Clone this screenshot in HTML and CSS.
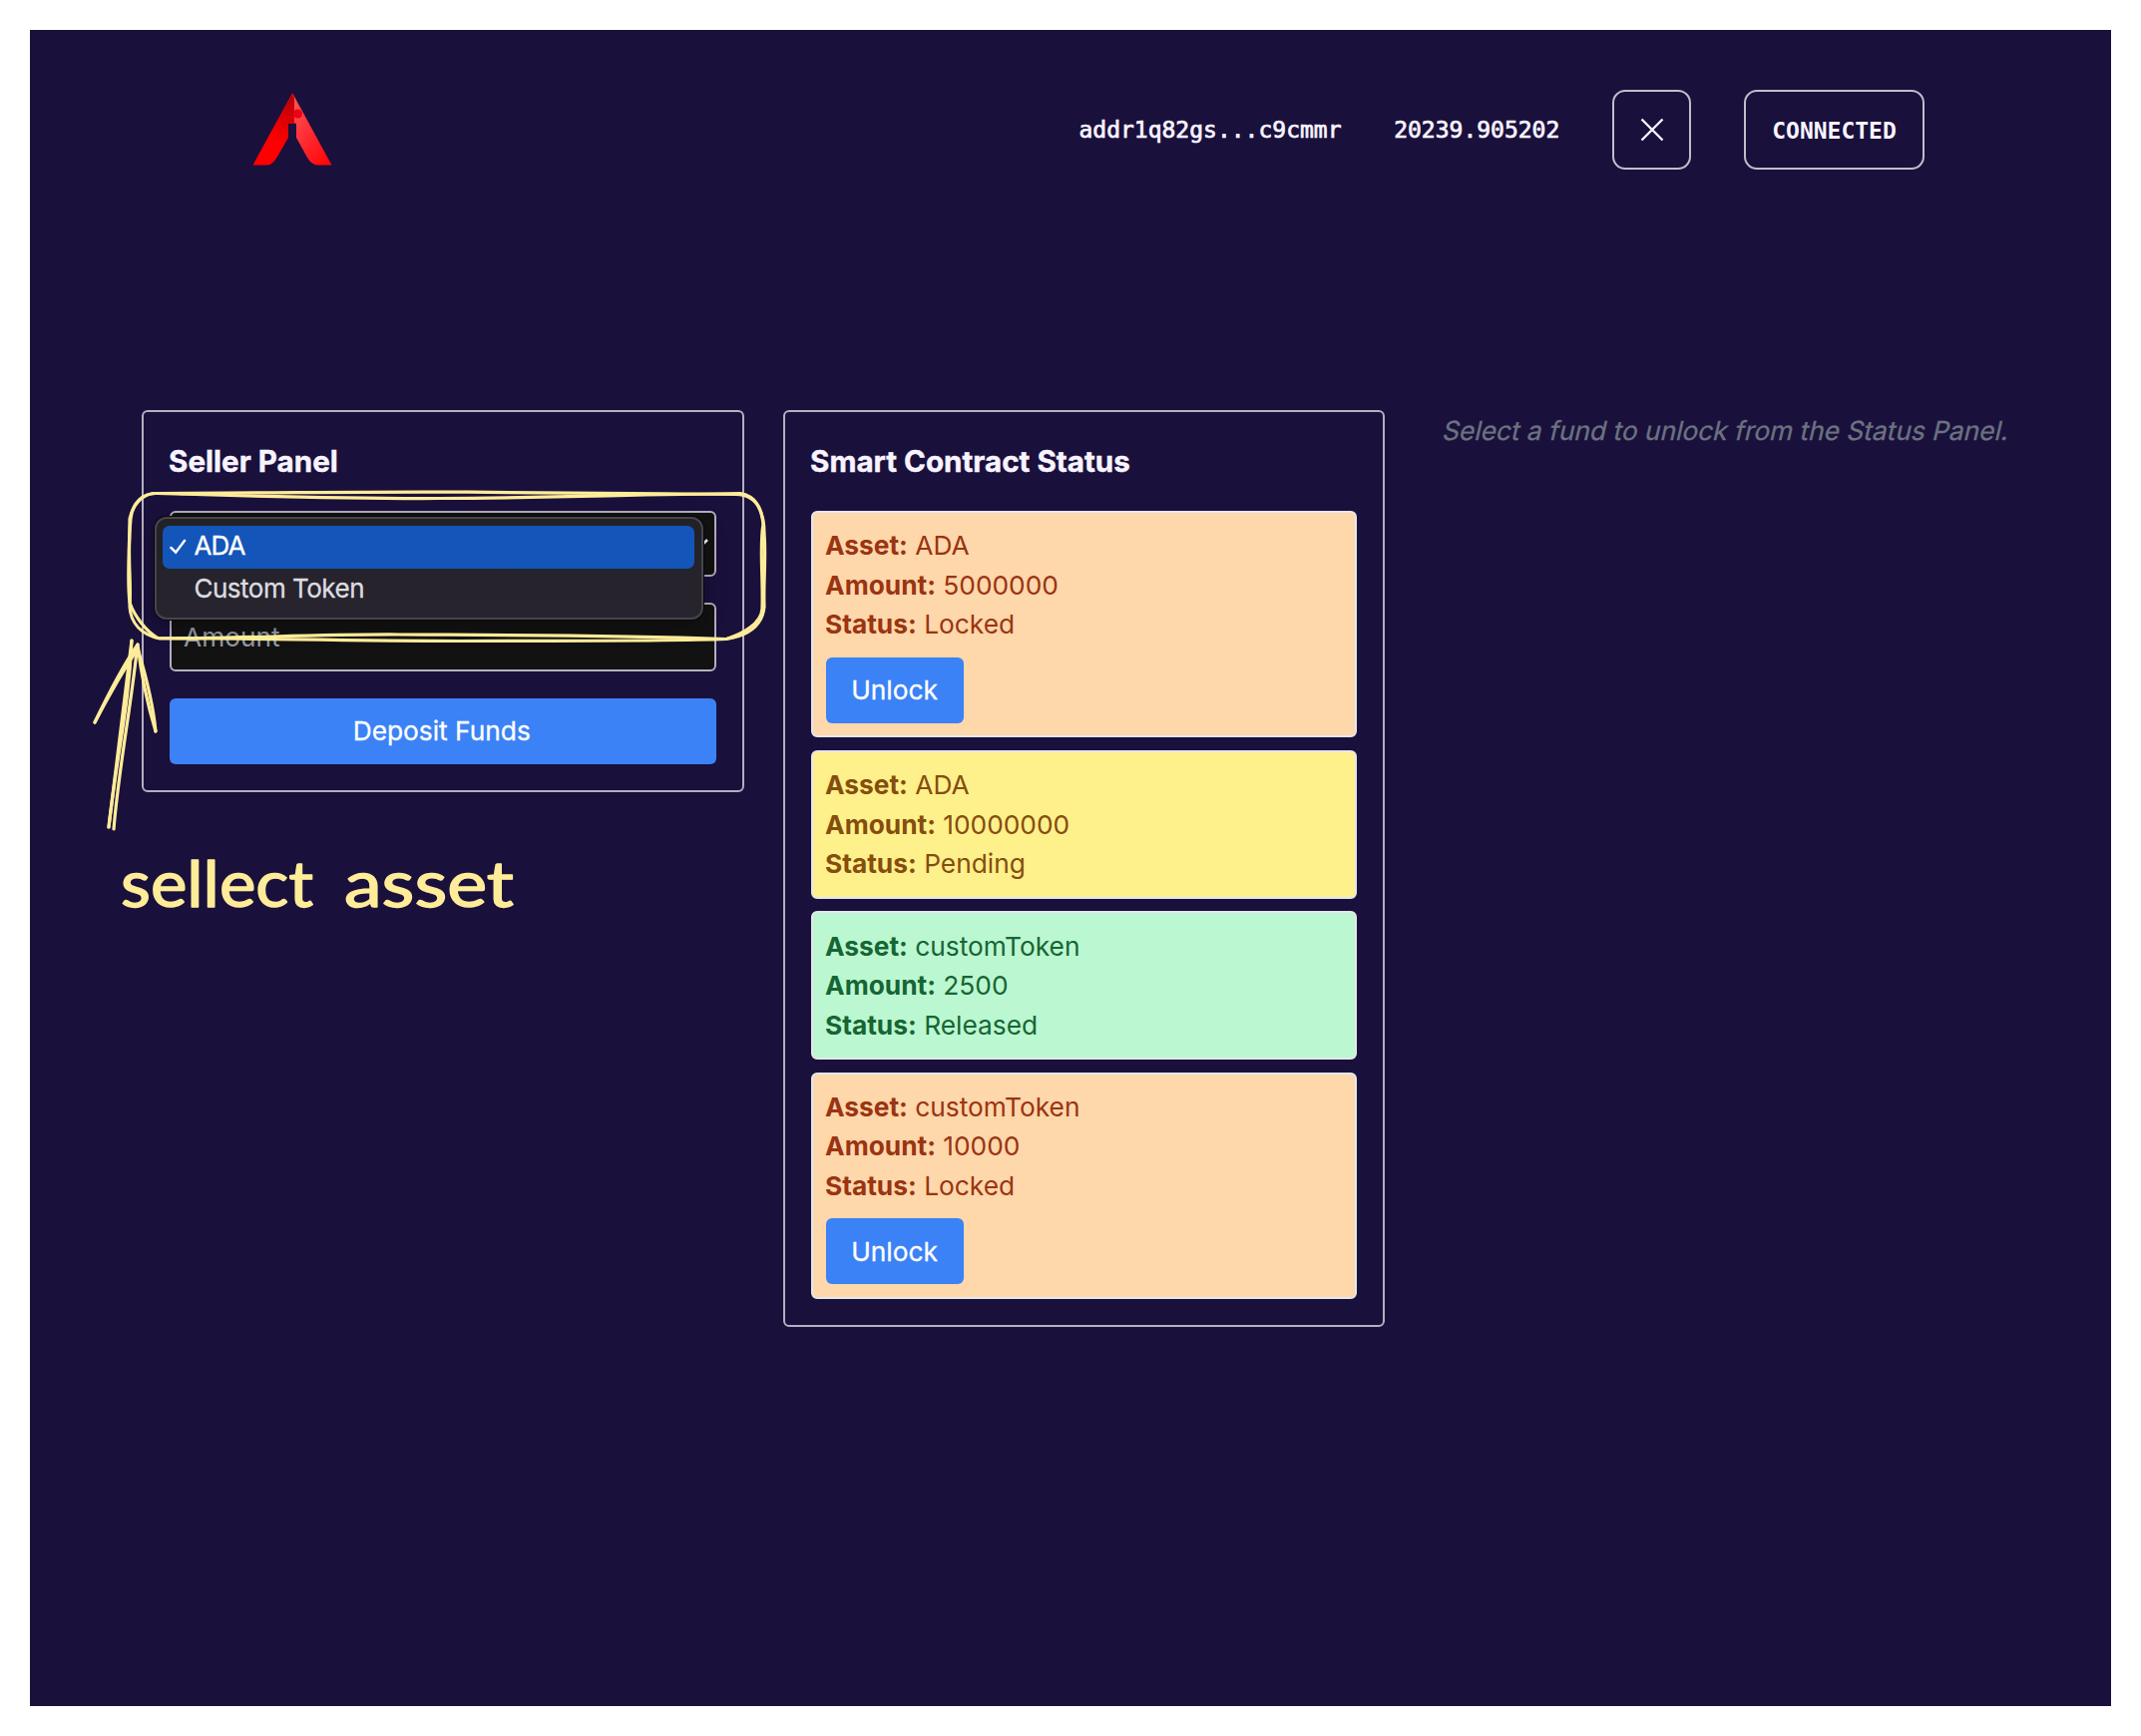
FILE: index.html
```html
<!DOCTYPE html>
<html lang="en">
<head>
<meta charset="utf-8">
<title>Escrow</title>
<link rel="stylesheet" href="styles.css">
</head>
<body>
<div class="app">
  <header class="topbar">
    <svg class="logo" viewBox="0 0 80 73">
      <defs>
        <linearGradient id="lg" x1="0.6" y1="0" x2="0.2" y2="1"><stop offset="0" stop-color="#c00008"/><stop offset="0.6" stop-color="#ff0000"/></linearGradient>
        <linearGradient id="rg" x1="0" y1="0" x2="0.8" y2="1"><stop offset="0" stop-color="#ff5a50"/><stop offset="0.5" stop-color="#ff3038"/><stop offset="1" stop-color="#ff0808"/></linearGradient>
      </defs>
      <path fill="url(#lg)" d="M40 0L43 6V31H36V45L25 64Q20 72.500 15 72.500H0.500Z"/>
      <path fill="url(#rg)" d="M40 0L79.500 72.500H65Q59 72 54.500 64L44 45V31L42 30V5Z"/>
      <circle cx="45.500" cy="21" r="4.500" fill="#ee0018"/>
    </svg>
    <div class="wallet">
      <span class="mono">addr1q82gs...c9cmmr</span>
      <span class="mono">20239.905202</span>
      <button class="outline close" aria-label="Disconnect"><svg viewBox="0 0 24 24"><path d="M1.500 1.500L22.500 22.500M22.500 1.500L1.500 22.500"/></svg></button>
      <button class="outline connected"><span>CONNECTED</span></button>
    </div>
  </header>
  <main class="columns">
    <section class="panel">
      <h2>Seller Panel</h2>
      <div class="form">
        <div class="field select">
          <svg class="chevron" viewBox="0 0 16 10"><path d="M1 1L8 8L15 1"/></svg>
          <ul class="menu">
            <li class="option selected"><svg class="check" viewBox="0 0 18 16"><path d="M1.500 9L6.500 14L16 1.500"/></svg>ADA</li>
            <li class="option">Custom Token</li>
          </ul>
        </div>
        <div class="field input">Amount</div>
        <button class="primary deposit">Deposit Funds</button>
      </div>
    </section>
    <section class="panel">
      <h2>Smart Contract Status</h2>
      <div class="cards">
        <article class="card locked">
          <p><strong>Asset:</strong> ADA</p>
          <p><strong>Amount:</strong> 5000000</p>
          <p><strong>Status:</strong> Locked</p>
          <button class="primary unlock">Unlock</button>
        </article>
        <article class="card pending">
          <p><strong>Asset:</strong> ADA</p>
          <p><strong>Amount:</strong> 10000000</p>
          <p><strong>Status:</strong> Pending</p>
        </article>
        <article class="card released">
          <p><strong>Asset:</strong> customToken</p>
          <p><strong>Amount:</strong> 2500</p>
          <p><strong>Status:</strong> Released</p>
        </article>
        <article class="card locked">
          <p><strong>Asset:</strong> customToken</p>
          <p><strong>Amount:</strong> 10000</p>
          <p><strong>Status:</strong> Locked</p>
          <button class="primary unlock">Unlock</button>
        </article>
      </div>
    </section>
    <p class="hint">Select a fund to unlock from the Status Panel.</p>
  </main>
</div>
<svg class="notes" viewBox="0 0 800 960">
  <g class="ink">
    <path d="M158 494.500C300 494 370 492.500 470 493.200S650 495 738 495.500C758 496 766 512 766 535C768 560 765 585 766 608C764 628 750 637 728 640.500C600 636 480 636.500 400 636S240 640 160 640C142 636 131 625 130 608C132 580 127 560 131 520C133 504 142 494 158 494.500"/>
    <path d="M158 494.500C220 496 320 500 440 499.500S620 496 742 494.500C757 497 763 508 765 525C761 550 765 575 764 610C763 625 745 635 728 640.500C680 642.500 560 642.500 460 642.500S260 640 158 639.500C146 632 135 618 130 604C127 580 130 550 130 520C133 506 142 496 154 494.500"/>
    <path d="M109 829L132 642"/><path d="M109 829C118 750 129 710 132 642"/>
    <path d="M114 831C119 770 131 710 137 653"/>
    <path d="M138 646Q120 672 95 724"/><path d="M138 650Q118 680 95 724"/>
    <path d="M138 646Q143 690 156 733"/><path d="M138 650Q153 700 156 733"/>
  </g>
  <text class="scribble" x="121" y="909" textLength="193" lengthAdjust="spacingAndGlyphs">sellect</text>
  <text class="scribble" x="345" y="909" textLength="170" lengthAdjust="spacingAndGlyphs">asset</text>
</svg>
</body>
</html>
```
FILE: styles.css
```css
* { box-sizing: border-box; }
body {
  margin: 0;
  padding: 30px;
  background: #fff;
  font-family: Inter, "Liberation Sans", sans-serif;
  font-size: 26.3px;
  line-height: 39.5px;
  position: relative;
}
h2, p, ul { margin: 0; padding: 0; }
button { font: inherit; cursor: pointer; }
.app {
  width: 2086px;
  height: 1680px;
  background: #1a103c;
  color: #f8f4ff;
}
.topbar {
  display: flex;
  justify-content: space-between;
  align-items: center;
  padding: 60px 187.500px 0 223px;
  height: 140px;
}
.logo { width: 80px; height: 73px; margin-top: -1px; }
.wallet { display: flex; align-items: center; gap: 52.600px; }
.mono, .connected {
  font-family: "DejaVu Sans Mono", monospace;
  font-size: 23px;
}
.mono { -webkit-text-stroke: 0.7px #f8f4ff; padding-top: 2px; }
.outline {
  display: flex;
  align-items: center;
  justify-content: center;
  height: 80px;
  border: 2px solid #c2bdca;
  border-radius: 13px;
  background: none;
  color: #f8f4ff;
}
.close { width: 79px; padding: 0 0 0 1px; }
.close svg { width: 24px; height: 24px; fill: none; stroke: #f8f4ff; stroke-width: 2.400; }
.connected { width: 181px; padding: 3px 0 0 1px; font-weight: 700; }
.columns {
  display: grid;
  grid-template-columns: 604px 603px 603px;
  column-gap: 39px;
  align-items: start;
  padding: 241px 0 0 112px;
}
.panel {
  border: 2px solid #b5afbf;
  border-radius: 6px;
  padding: 26px 26px 26px 25.500px;
}
h2 {
  font-size: 29.6px;
  line-height: 46px;
  font-weight: 700;
  margin-bottom: 26.800px;
  margin-left: -0.500px;
  -webkit-text-stroke: 0.4px currentColor;
}
.form { display: flex; flex-direction: column; }
.field {
  border: 2px solid #b5afbf;
  border-radius: 6px;
  background: #121212;
}
.select { height: 66px; position: relative; }
.chevron {
  position: absolute;
  right: 6px;
  top: 26px;
  width: 16px;
  height: 10px;
  fill: none;
  stroke: #fff;
  stroke-width: 2.500;
}
.menu {
  position: absolute;
  left: -17px;
  top: 4px;
  width: 550px;
  height: 103px;
  padding: 7px 7px 7px 6px;
  list-style: none;
  background: linear-gradient(#222126, #28242f);
  border: 2px solid #46454b;
  border-radius: 12px;
  box-shadow: 0 0 0 1px #08080a, 0 6px 22px rgba(0, 0, 0, 0.3);
}
.option {
  position: relative;
  height: 43px;
  line-height: 40px;
  padding-left: 32px;
  border-radius: 7px;
  font-size: 26px;
  color: #dddce0;
  letter-spacing: -0.500px;
  -webkit-text-stroke: 0.3px currentColor;
}
.selected { background: #1455b9; color: #fff; letter-spacing: -0.900px; }
.check {
  position: absolute;
  left: 7px;
  top: 13px;
  width: 17px;
  height: 16px;
  fill: none;
  stroke: #fff;
  stroke-width: 2.600;
  stroke-linecap: round;
}
.input {
  height: 69px;
  margin-top: 26.500px;
  padding: 12.500px;
  color: #9098a5;
}
.primary {
  border: 0;
  border-radius: 6px;
  background: #3b82f6;
  color: #fff;
  height: 66px;
  padding: 0;
  -webkit-text-stroke: 0.3px #fff;
}
.deposit { margin-top: 26.300px; padding-right: 2px; }
.cards { display: flex; flex-direction: column; gap: 12.800px; }
.card {
  border: 2px solid #e5e7eb;
  border-radius: 6px;
  padding: 13.300px 12.500px 12.700px;
}
.card strong { font-weight: 700; }
.locked { background: #fed7aa; color: #9a3412; }
.pending { background: #fef08a; color: #854d0e; }
.released { background: #bbf7d0; color: #166534; }
.unlock { display: block; width: 138px; margin: 13px 0 0 0.600px; }
.hint {
  justify-self: center;
  padding: 0.500px 0 0 5px;
  color: #6b7280;
  white-space: nowrap;
  -webkit-text-stroke: 0.3px #6b7280;
  transform: skewX(-13deg);
}
.notes {
  position: absolute;
  left: 0;
  top: 0;
  width: 800px;
  height: 960px;
  pointer-events: none;
}
.ink path { fill: none; stroke: #ffec99; stroke-width: 3.200; stroke-linecap: round; }
.scribble {
  font-family: Lato, sans-serif;
  font-size: 63px;
  fill: #ffec99;
  stroke: #ffec99;
  stroke-width: 1.400;
  stroke-linejoin: round;
}
```
